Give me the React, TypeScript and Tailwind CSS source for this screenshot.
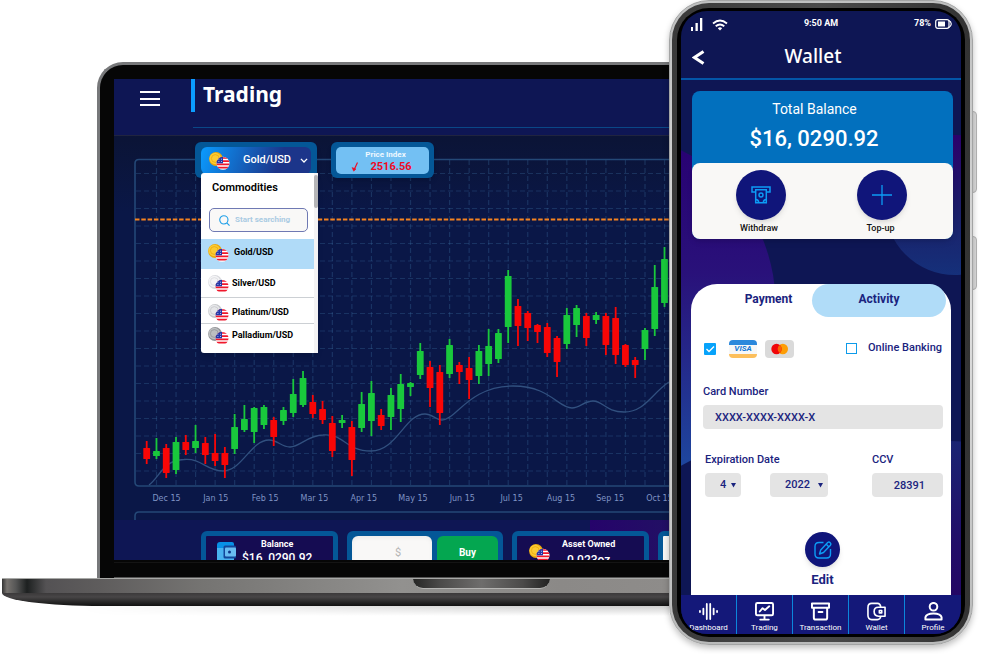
import React, { useId } from "react";

type Candle = [up: 0 | 1, bodyTop: number, bodyBottom: number, wickTop: number, wickBottom: number];

const candles: Candle[] = [
  [0, 448, 459, 441, 464], [1, 451, 456, 438, 459], [0, 448, 473, 444, 478], [1, 442, 470, 437, 474],
  [0, 442, 450, 435, 455], [1, 441, 448, 425, 453], [0, 443, 455, 437, 464], [0, 453, 461, 434, 466],
  [0, 453, 465, 447, 478], [1, 427, 449, 414, 454], [1, 419, 430, 405, 432], [1, 408, 432, 407, 443],
  [1, 407, 425, 405, 429], [0, 420, 437, 417, 446], [1, 410, 421, 407, 425], [1, 394, 413, 379, 417],
  [1, 378, 405, 371, 407], [0, 402, 414, 395, 418], [0, 409, 420, 401, 424], [0, 423, 451, 416, 457],
  [1, 420, 423, 415, 428], [0, 427, 460, 421, 476], [1, 404, 428, 392, 432], [1, 393, 421, 381, 436],
  [0, 415, 426, 409, 430], [1, 395, 417, 388, 430], [1, 384, 409, 374, 422], [1, 383, 387, 382, 396],
  [1, 351, 375, 343, 379], [0, 367, 388, 361, 407], [0, 372, 413, 365, 425], [1, 345, 374, 339, 378],
  [0, 365, 372, 362, 384], [0, 368, 380, 357, 399], [1, 351, 376, 345, 384], [1, 346, 364, 329, 376],
  [1, 333, 359, 329, 363], [1, 276, 327, 270, 343], [0, 306, 326, 299, 346], [0, 313, 328, 311, 341],
  [0, 325, 332, 324, 343], [0, 327, 353, 323, 357], [0, 338, 362, 336, 377], [1, 315, 344, 308, 349],
  [1, 308, 325, 305, 337], [0, 316, 338, 313, 346], [1, 315, 320, 312, 324], [0, 316, 345, 313, 355],
  [0, 318, 355, 307, 364], [0, 345, 365, 344, 367], [0, 360, 365, 357, 378], [1, 330, 349, 328, 360],
  [1, 287, 329, 265, 336], [1, 259, 303, 247, 307],
];

const months = ["Dec", "Jan", "Feb", "Mar", "Apr", "May", "Jun", "Jul", "Aug", "Sep", "Oct"];

const gridX = Array.from({ length: 80 }, (_, i) => 156.5 + i * 19.54);
const gridY = Array.from({ length: 18 }, (_, i) => 173.5 + i * 17.5);

function Chart() {
  return (
    <svg className="block h-[384px] w-full" role="img" aria-label="Gold/USD price chart">
      <g transform="translate(-114 -136)">
        <g stroke="#3f74a4" strokeOpacity="0.3" strokeWidth="1.2" strokeDasharray="5 3">
          {gridX.map((x) => (
            <line key={x} x1={x} x2={x} y1={160} y2={486} />
          ))}
          {gridY.map((y) => (
            <line key={y} x1={136} x2={2400} y1={y} y2={y} />
          ))}
        </g>
        <path d="M2400 159.5H139q-4 0-4 4V482q0 4 4 4H2400" fill="none" stroke="#244877" strokeWidth="1.6" />
        <path d="M2400 512H139q-4 0-4 4v10" fill="none" stroke="#244877" strokeWidth="1.6" />
        <path
          d="M149 485C160 477 163 460 184 459.500C202 458 206 471 223 471C242 471 251 440 269 440C278 440 281 447 290 447C300 447 308 435 323 435C344 433 345 451 371 451C397 451 405 414 425 414C432 414 436 420 442 420C456 420 469 386 513 386C550 386 558 408 572 408C580 408 584 401 593 401C603 401 606 412 624 412C645 412 652 393 669 382"
          fill="none"
          stroke="#31507f"
          strokeWidth="1.3"
        />
        <line x1="135" x2="2400" y1="219.500" y2="219.500" stroke="#f58320" strokeWidth="1.8" strokeDasharray="4.500 1.800" />
        {candles.map(([up, top, bottom, wickTop, wickBottom], i) => {
          const x = 146.7 + i * 9.77;
          return (
            <g key={i} fill={up ? "#19c83c" : "#f90606"}>
              <rect x={x - 0.9} y={wickTop} width="1.8" height={wickBottom - wickTop} />
              <rect x={x - 3.4} y={top} width="6.8" height={bottom - top} rx="0.6" />
            </g>
          );
        })}
        <g fill="#7f93c4" fontSize="8" fontFamily="'DejaVu Sans', sans-serif" textAnchor="middle">
          {months.map((m, i) => (
            <text key={m} x={166.5 + i * 49.3} y="501">
              {m} 15
            </text>
          ))}
        </g>
      </g>
    </svg>
  );
}

function Coin({ tone = "gold", className }: { tone?: "gold" | "silver" | "platinum" | "palladium"; className?: string }) {
  const id = useId();
  const tones = {
    gold: ["#eba80c", "#fccb33"],
    silver: ["#d9dade", "#f4f4f6"],
    platinum: ["#c5c7ca", "#e6e7e9"],
    palladium: ["#929497", "#bcbec0"],
  };
  const [edge, face] = tones[tone];
  return (
    <svg viewBox="0 0 21 18" className={className} aria-hidden="true">
      <clipPath id={id}>
        <circle cx="14" cy="11.300" r="6.500" />
      </clipPath>
      <circle cx="7" cy="7" r="6.900" fill={edge} />
      <circle cx="6.300" cy="6.500" r="5.800" fill={face} />
      <circle cx="6.300" cy="6.500" r="3.900" fill="none" stroke={edge} strokeWidth="0.8" />
      <g clipPath={`url(#${id})`}>
        <rect x="7" y="4" width="14" height="14" fill="#fff" />
        <path d="M7 6h14M7 9.200h14M7 12.400h14M7 15.600h14" stroke="#f0182c" strokeWidth="1.7" />
        <rect x="7" y="4" width="7" height="7.300" fill="#2337a8" />
        <path d="M9.500 7.200h.8M12 7.200h.8M9.500 9.500h.8M12 9.500h.8" stroke="#fff" strokeWidth="0.8" />
      </g>
    </svg>
  );
}

const commodities = [
  { name: "Gold/USD", tone: "gold" as const, row: "h-[30px] bg-[#b0dbf8] gap-[5px] pb-0.5" },
  { name: "Silver/USD", tone: "silver" as const, row: "h-[29px] gap-[3px] border-b border-[#ccd0d4] pt-0.5" },
  { name: "Platinum/USD", tone: "platinum" as const, row: "h-[26px] gap-[3px] border-b border-[#ccd0d4] pt-1" },
  { name: "Palladium/USD", tone: "palladium" as const, row: "h-[24px] gap-[3px]" },
];

function CommodityPicker() {
  return (
    <div className="relative h-9 w-[122px] rounded-md bg-[#045797] px-1.5 pt-[5px] shadow-md">
      <button
        type="button"
        aria-haspopup="listbox"
        aria-expanded="true"
        className="flex h-[27px] w-[110px] items-center rounded-md bg-linear-[110deg] from-[#0a9bff] to-[#1c358a] to-70% pr-[3px] pl-2 text-[11px] font-medium text-white"
      >
        <Coin className="h-[18px] w-[21px]" />
        <span className="flex-1 pl-1 text-center">Gold/USD</span>
        <svg viewBox="0 0 9 6" className="w-2" fill="none" stroke="currentColor" strokeWidth="1.500" aria-hidden="true">
          <path d="M1 1l3.500 3.500L8 1" />
        </svg>
      </button>
      <div className="absolute top-[31px] left-1.5 flex h-[180px] w-[117px] rounded-[3px] bg-white text-black shadow-md">
        <div className="min-w-0 flex-1">
          <h2 className="px-[11px] pt-2 text-[11px] leading-[14px] font-semibold">Commodities</h2>
          <label className="mt-[13px] mr-1.5 ml-2 flex h-6 items-center gap-[5px] rounded-[5px] border border-[#6f79b3] bg-[#f9f8f7] pl-[9px]">
            <svg viewBox="0 0 12 12" className="size-[11px] shrink-0" fill="none" stroke="#20a0e8" strokeWidth="1.200" aria-hidden="true">
              <circle cx="5.300" cy="5.300" r="4.500" />
              <path d="M8.500 8.500l3 3" />
            </svg>
            <input
              type="search"
              aria-label="Search commodities"
              placeholder="Start searching"
              className="w-full min-w-0 bg-transparent text-[8px] font-bold outline-none placeholder:text-[#aacbe3]"
            />
          </label>
          <div role="listbox" aria-label="Commodities" className="pt-[7px]">
            {commodities.map((c) => (
              <button
                key={c.name}
                type="button"
                role="option"
                aria-selected={c.name === "Gold/USD"}
                className={`flex w-full items-center pl-[7px] text-[9px] font-bold ${c.row}`}
              >
                <Coin tone={c.tone} className="h-[18px] w-[21px]" />
                {c.name}
              </button>
            ))}
          </div>
        </div>
        <div className="w-1 bg-[#f4f3f4] pt-0.5">
          <div className="h-[33px] rounded-sm bg-[#b5b5b7]" />
        </div>
      </div>
    </div>
  );
}

function PriceIndex() {
  return (
    <div className="h-9 w-[103px] rounded-md bg-[#045797] px-[5px] py-[5px] shadow-md">
      <div className="flex h-[27px] flex-col items-center rounded-[5px] bg-[#73c0f3] pt-[2px] pl-1.5">
        <span className="text-[8px] leading-[11px] font-bold text-[#eef8ff]">Price Index</span>
        <span className="flex items-center gap-3 pr-2 text-[11px] leading-[13px] font-bold text-[#ee0a24]">
          <svg viewBox="0 0 7 11" className="h-[11px] w-[7px]" fill="none" stroke="currentColor" strokeWidth="1.200" aria-hidden="true">
            <path d="M6.500 1.500L3 9" />
            <path d="M1 6.500l1.700 3.700L5 8z" fill="currentColor" strokeWidth="0.500" />
          </svg>
          2516.56
        </span>
      </div>
    </div>
  );
}

function WalletTile() {
  return (
    <svg viewBox="0 0 20 20" className="size-5 shrink-0" aria-hidden="true">
      <path d="M1 3q0-3 3-3h12q2 0 2 2v18H4q-3 0-3-3z" fill="#0790e6" />
      <path d="M1 6h17v14H4q-3 0-3-3z" fill="#49b2f0" />
      <rect x="7.500" y="3.500" width="12.500" height="13" rx="1.500" fill="#12479a" />
      <rect x="9" y="5.500" width="11" height="9" rx="1" fill="#69bcf1" />
      <circle cx="13.500" cy="10" r="1.500" fill="#0d3789" />
    </svg>
  );
}

function Laptop() {
  return (
    <section className="min-w-0 flex-1 overflow-hidden pt-[62px]" aria-label="Trading">
      <div className="ml-[97px] rounded-tl-[26px] border-t-[3px] border-l-[3px] border-[#77787a] bg-[#060606] pt-[14px] pl-[14px]">
        <div className="bg-[#0e1654]">
          <header className="flex h-14 text-white">
            <button type="button" aria-label="Menu" className="mt-3 ml-[26px] flex h-[15px] w-5 flex-col justify-between">
              <span className="h-0.5 w-full bg-white" />
              <span className="h-0.5 w-full bg-white" />
              <span className="h-0.5 w-full bg-white" />
            </button>
            <div className="ml-[31px] flex-1">
              <h1 className="flex h-[33px] items-center border-l-4 border-[#0b9dff] pb-[3px] pl-2 font-['Noto_Sans',sans-serif] text-[21px] leading-[30px] font-bold">
                Trading
              </h1>
              <div className="mt-[15px] ml-0.5 h-px bg-[#0a4787]" />
            </div>
          </header>
          <div className="relative border-t border-[#20243f] bg-linear-to-b from-[#0b1436] to-[#0a1747] to-20%">
            <Chart />
            <div className="absolute top-[6px] left-[81px] flex gap-[14px]">
              <CommodityPicker />
              <PriceIndex />
            </div>
          </div>
          <div className="flex h-10 items-start gap-[9px] overflow-hidden bg-[linear-gradient(90deg,transparent_476px,#26036b_476px,#221064)] pt-[11px] pl-[87px] text-white">
            <div className="flex h-14 w-[137px] shrink-0 gap-[6px] rounded-md border-[5px] border-[#045797] bg-[#150c52] pt-[3px] pl-[10px]">
              <div className="pt-[3px]">
                <WalletTile />
              </div>
              <p className="text-center">
                <span className="block text-[9px] leading-[11px] font-bold">Balance</span>
                <span className="block text-[12px] leading-[17px] font-medium">$16, 0290.92</span>
              </p>
            </div>
            <div className="flex h-14 w-[156px] shrink-0 gap-[5px] rounded-md border-[5px] border-[#045797] bg-[#045797]">
              <input
                aria-label="Amount in dollars"
                placeholder="$"
                className="h-8 w-20 rounded-md bg-[#f9f8f7] pl-3 text-center text-[11px] shadow-inner placeholder:text-[#b5b5b5]"
              />
              <button type="button" className="h-10 flex-1 rounded-md bg-[#04a650] pb-2 text-[10px] font-bold">
                Buy
              </button>
            </div>
            <div className="flex h-14 w-[137px] shrink-0 gap-3 rounded-md border-[5px] border-[#045797] bg-[#150c52] pt-[3px] pl-[12px]">
              <div className="pt-[5px]">
                <Coin className="h-[18px] w-[21px]" />
              </div>
              <p className="text-center">
                <span className="block text-[9px] leading-[11px] font-bold">Asset Owned</span>
                <span className="block text-[12px] leading-[21px] font-medium">0.023oz</span>
              </p>
            </div>
            <div className="h-14 min-w-[156px] flex-1 rounded-md border-[5px] border-[#045797] bg-[#f9f8f7]" />
          </div>
        </div>
        <div className="mt-0.5 h-4 border-t border-b border-t-[#141414] border-b-[#555]" />
      </div>
      <div className="ml-0.5 h-[15px] border-t border-[#a8a9a7] bg-[linear-gradient(90deg,#333_0px,#77736f_5px,#555_14px,#1d2020_25px,#545254_44px,#5f5d5d_100px,#757472_200px,#92918f_400px,#8b8987_560px,#8e8c8a)]">
        <div className="ml-[411px] h-2.5 w-[137px] rounded-b-[10px] border-b border-[#b5b5b3] bg-[linear-gradient(90deg,#262625,#4b4a49_20%,#6e6d6c_50%,#4b4a49_80%,#222221)]" />
      </div>
      <div className="ml-0.5 h-[13px] rounded-bl-[100px_13px] bg-linear-to-b from-[#3b393a] via-[#484647] via-30% to-[#111]" />
      <div className="ml-20 h-2.5 bg-linear-to-b from-[#cfcfcf] to-white mask-l-from-20%" />
    </section>
  );
}

function StatusBar() {
  return (
    <div className="grid h-[26px] grid-cols-3 items-center px-[9px] text-[9px] font-bold text-white">
      <span className="flex items-end gap-[9px]">
        <svg viewBox="0 0 13 13" className="size-[13px]" fill="#fff" aria-hidden="true">
          <rect x="1" y="9" width="2" height="4" />
          <rect x="5.500" y="5" width="2.300" height="8" />
          <rect x="10" y="0" width="2.300" height="13" />
        </svg>
        <svg viewBox="0 0 16 12" className="h-3 w-4" fill="none" stroke="#fff" strokeWidth="1.800" aria-hidden="true">
          <path d="M1 4.500q7-6 14 0M3.700 7.300q4.300-3.500 8.600 0" />
          <path d="M5.800 9.200q2.200-1.700 4.400 0L8 11.500z" fill="#fff" stroke="none" />
        </svg>
      </span>
      <span className="text-center">9:50 AM</span>
      <span className="flex items-center justify-end gap-1">
        78%
        <svg viewBox="0 0 17 10" className="h-2.5 w-[17px]" fill="none" stroke="#fff" aria-hidden="true">
          <rect x=".7" y=".7" width="13.300" height="8.600" rx="2" strokeWidth="1.200" />
          <rect x="3" y="2.500" width="7" height="5" fill="#fff" stroke="none" />
          <path d="M14 1.500q2 1 2.300 3.500Q16 7.500 14 8.500" strokeWidth="1.200" />
        </svg>
      </span>
    </div>
  );
}

function Backdrop() {
  return (
    <svg viewBox="681 81 280 514" className="absolute inset-x-0 top-[70px] h-[514px] w-full" preserveAspectRatio="none" aria-hidden="true">
      <defs>
        <linearGradient id="orb-left" x1="0" y1="0" x2="0" y2="1">
          <stop offset="0" stopColor="#280072" />
          <stop offset="0.400" stopColor="#29117a" />
          <stop offset="1" stopColor="#1d4aa0" />
        </linearGradient>
        <linearGradient id="orb-right" x1="0" y1="0" x2="0" y2="1">
          <stop offset="0" stopColor="#2b006b" />
          <stop offset="0.550" stopColor="#1b1f69" />
          <stop offset="1" stopColor="#15307a" />
        </linearGradient>
        <linearGradient id="orb-low" x1="0" y1="0" x2="0" y2="1">
          <stop offset="0" stopColor="#1a2472" />
          <stop offset="0.500" stopColor="#220d68" />
          <stop offset="1" stopColor="#250060" />
        </linearGradient>
      </defs>
      <ellipse cx="618" cy="308" rx="158" ry="172" fill="url(#orb-left)" />
      <circle cx="955" cy="205" r="70" fill="url(#orb-right)" />
      <circle cx="950" cy="546" r="105" fill="url(#orb-low)" />
    </svg>
  );
}

function BalanceCard() {
  const round = "mx-auto flex size-[50px] items-center justify-center rounded-full bg-[#10157a] text-[#0c9cf5] shadow-md";
  return (
    <div className="mt-[11px] mr-2 ml-[11px] rounded-lg bg-[#0270be] text-white">
      <p className="pt-[9px] pr-4 text-center text-[14px] leading-[18px]">Total Balance</p>
      <p className="h-[45px] pt-[7px] pr-[17px] text-center text-[22px] leading-7 font-medium">$16, 0290.92</p>
      <div className="grid h-[76px] grid-cols-2 rounded-lg bg-[#f9f8f6] pt-[7px] pr-[11px] pl-2 text-[9px] font-medium text-[#111] shadow-md">
        <button type="button" className="flex flex-col items-center">
          <span className={round}>
            <svg viewBox="0 0 20 18" className="h-[18px] w-5" fill="none" stroke="currentColor" strokeWidth="1.500" aria-hidden="true">
              <path d="M4.500 6H1V1h18v5h-3.500" />
              <path d="M4.700 3.800h10.600v13H4.700z" />
              <circle cx="10" cy="9" r="2" />
              <path d="M4.700 13.500q3 0 3 3.300M15.300 13.500q-3 0-3 3.300" />
            </svg>
          </span>
          <span className="block pr-[3px] leading-[16px]">Withdraw</span>
        </button>
        <button type="button" className="flex flex-col items-center">
          <span className={round}>
            <svg viewBox="0 0 20 20" className="size-5" stroke="currentColor" strokeWidth="1.300" aria-hidden="true">
              <path d="M10 0v20M0 10h20" />
            </svg>
          </span>
          <span className="block pr-0.5 leading-[16px]">Top-up</span>
        </button>
      </div>
    </div>
  );
}

function Field({ id, label, className, children }: { id: string; label: string; className?: string; children: React.ReactNode }) {
  return (
    <div className={className}>
      <label htmlFor={id} className="block text-[11px] leading-[14px] font-medium">
        {label}
      </label>
      {children}
    </div>
  );
}

function Picker({ id, label, value, width }: { id: string; label: string; value: string; width: string }) {
  return (
    <span className={`relative block ${width}`}>
      <select id={id} aria-label={label} defaultValue={value} className="block h-6 w-full appearance-none rounded bg-[#e4e4e4] pl-[15px] text-[11px] font-medium">
        <option>{value}</option>
      </select>
      <svg viewBox="0 0 5 5" className="pointer-events-none absolute top-[10px] right-[5px] size-[5px]" fill="currentColor" aria-hidden="true">
        <path d="M0 0h5L2.500 4.500z" />
      </svg>
    </span>
  );
}

function PaymentPanel() {
  return (
    <div className="mx-[10px] mt-[45px] flex-1 rounded-t-[26px] bg-white text-[#1a237e]">
      <div role="tablist" className="flex pr-[5px] text-[12px] font-bold">
        <button type="button" role="tab" aria-selected="true" className="h-[33px] flex-1 pb-[3px] pl-[34px]">
          Payment
        </button>
        <button type="button" role="tab" aria-selected="false" className="h-[33px] w-[134px] rounded-full bg-[#b0dcf8] pb-[3px]">
          Activity
        </button>
      </div>
      <div className="mt-[22px] flex h-[19px] items-center pr-[9px] pl-[13px]">
        <label className="flex items-center">
          <span className="relative flex size-3">
            <input type="checkbox" defaultChecked aria-label="Card" className="size-3 appearance-none rounded-[1px] bg-[#07a3fb]" />
            <svg viewBox="0 0 12 12" className="pointer-events-none absolute inset-0 size-3" fill="none" stroke="#fff" strokeWidth="1.300" aria-hidden="true">
              <path d="M2.500 6l2.500 2.500L10 3.500" />
            </svg>
          </span>
          <span className="ml-[13px] flex h-[18px] w-7 items-center justify-center rounded border-t-[5px] border-b-4 border-t-[#2b88dc] border-b-[#fcbf5c] bg-[#f7f7f7] text-[8px] font-bold text-[#1477d4] italic">
            VISA
          </span>
          <svg viewBox="0 0 29 18" className="ml-2 h-[18px] w-[29px]" aria-label="Mastercard">
            <rect width="29" height="18" rx="4" fill="#dadada" />
            <circle cx="17.800" cy="9" r="5.200" fill="#fd9d05" />
            <circle cx="11.500" cy="9" r="5.200" fill="#f00508" />
            <path d="M14.650 4.900a5.200 5.200 0 0 1 0 8.200a5.200 5.200 0 0 1 0-8.200z" fill="#fb6204" />
          </svg>
        </label>
        <label className="ml-auto flex items-center gap-[11px] text-[11px] font-medium">
          <input type="checkbox" className="size-[11px] appearance-none border border-[#0d9bea]" />
          Online Banking
        </label>
      </div>
      <Field id="card" label="Card Number" className="mt-[27px] pr-2 pl-3">
        <input id="card" defaultValue="XXXX-XXXX-XXXX-X" className="mt-[6px] block h-6 w-full rounded bg-[#e4e4e4] px-3 text-[11px] font-medium" />
      </Field>
      <div className="mt-6 flex justify-between pr-2 pl-[14px]">
        <Field id="month" label="Expiration Date">
          <div className="mt-[6px] flex gap-[29px]">
            <Picker id="month" label="Expiration month" value="4" width="w-9" />
            <Picker id="year" label="Expiration year" value="2022" width="w-[58px]" />
          </div>
        </Field>
        <Field id="ccv" label="CCV" className="w-[71px]">
          <input id="ccv" defaultValue="28391" className="mt-[6px] block h-6 w-full rounded bg-[#e4e4e4] pl-1 text-center text-[11px] font-medium" />
        </Field>
      </div>
      <button type="button" className="mx-auto mt-[35px] flex flex-col items-center pl-[3px] text-[13px] font-bold">
        <span className="flex size-[35px] items-center justify-center rounded-full bg-[#10157a] text-[#0c9cf5] shadow-md">
          <svg viewBox="0 0 18 18" className="size-[18px]" fill="none" stroke="currentColor" strokeWidth="1.400" strokeLinejoin="round" aria-hidden="true">
            <path d="M9.500 1.500H5Q1 1.500 1 5.500v7.500q0 4 4 4h7.500q4 0 4-4V8" />
            <path d="M13.700 1.500q1.300-1 2.500.2t.2 2.500L9.500 11.500l-4 1.500 1.200-4zM12.300 3.300l2.400 2.400" />
          </svg>
        </span>
        <span className="leading-[26px]">Edit</span>
      </button>
    </div>
  );
}

const navItems = [
  { label: "Dashboard", icon: <path d="M1 9.500v1M4.600 7v6M8.200 2v16M11.800 2v16M15.400 7v6M19 9.500v1" strokeWidth="1.900" /> },
  { label: "Trading", icon: <path d="M2.500 1h15q1.500 0 1.500 1.500v10q0 1.500-1.500 1.500h-15Q1 14 1 12.500v-10Q1 1 2.500 1zM10 14v4M5.500 18.500h9M5 10l3-3.500 2.500 2 4.500-4" strokeWidth="2" /> },
  { label: "Transaction", icon: <path d="M1 1.500h18V6H1zM3 6v10.500q0 2 2 2h10q2 0 2-2V6M8 10.500h4" strokeWidth="2.100" /> },
  { label: "Wallet", icon: <path d="M14.500 5.500Q14 1.500 11 1.500H5Q1 1.500 1 6v8q0 4.500 4 4.500h6q3 0 3.500-3.500M19 15V5.500h-7q-4.500 0-4.500 4.500t4.500 5zM13 9v2.500h2.500V9z" strokeWidth="1.700" /> },
  { label: "Profile", icon: <path d="M14 5a4 4 0 1 1-8 0a4 4 0 1 1 8 0zM1.500 18.500v-2.500Q2.500 12 10 12t8.500 4v2.500z" strokeWidth="2.100" /> },
];

function Phone() {
  return (
    <section aria-label="Wallet" className="relative w-[304px] shrink-0 self-start">
      <div className="absolute top-[111px] -right-1 h-[82px] w-2 rounded-r-sm border border-[#b5b5b5] bg-[#dcdcdc]" />
      <div className="absolute top-[236px] -right-1 h-[54px] w-2 rounded-r-sm border border-[#b5b5b5] bg-[#dcdcdc]" />
      <div className="relative rounded-[40px] border border-[#a3a4a4] bg-linear-to-b from-[#bfc0c0] via-[#dedede] to-[#b9baba] p-0.5 shadow-[0_3px_6px_rgba(0,0,0,0.25)]">
        <div className="rounded-[37px] bg-linear-to-r from-[#3a3a3a] via-[#4a4a4a] to-[#333] p-[5px]">
          <div className="rounded-[32px] bg-black px-1 py-[3px]">
            <div className="relative flex h-[623px] flex-col overflow-hidden rounded-[26px] bg-[#0e1654]">
              <Backdrop />
              <div className="relative flex flex-1 flex-col">
                <StatusBar />
                <header className="flex h-[43px] items-center border-b-2 border-[#0356a8] pr-[40px] pl-[11px] text-white">
                  <button type="button" aria-label="Back">
                    <svg viewBox="0 0 13 15" className="h-[15px] w-[13px]" fill="none" stroke="currentColor" strokeWidth="3" aria-hidden="true">
                      <path d="M11.500 1.500L2.500 7.500l9 6" />
                    </svg>
                  </button>
                  <h1 className="flex-1 pb-1 text-center font-['Noto_Sans',sans-serif] text-[19px] leading-6 font-medium">Wallet</h1>
                </header>
                <BalanceCard />
                <PaymentPanel />
                <nav className="grid h-[39px] grid-cols-5 divide-x divide-[#0b86dc] bg-[#141879] text-white">
                  {navItems.map((item) => (
                    <a key={item.label} href="#" className="flex flex-col items-center pt-[7px] text-[8px] leading-[10px]">
                      <svg viewBox="0 0 20 20" className="mb-0.5 size-[19px]" fill="none" stroke="currentColor" strokeLinejoin="round" strokeLinecap="round" aria-hidden="true">
                        {item.icon}
                      </svg>
                      {item.label}
                    </a>
                  ))}
                </nav>
              </div>
            </div>
          </div>
        </div>
      </div>
    </section>
  );
}

export default function App() {
  return (
    <main className="flex min-h-screen overflow-hidden bg-white pr-[13px] font-[Roboto,'Liberation_Sans',sans-serif]">
      <Laptop />
      <Phone />
    </main>
  );
}
